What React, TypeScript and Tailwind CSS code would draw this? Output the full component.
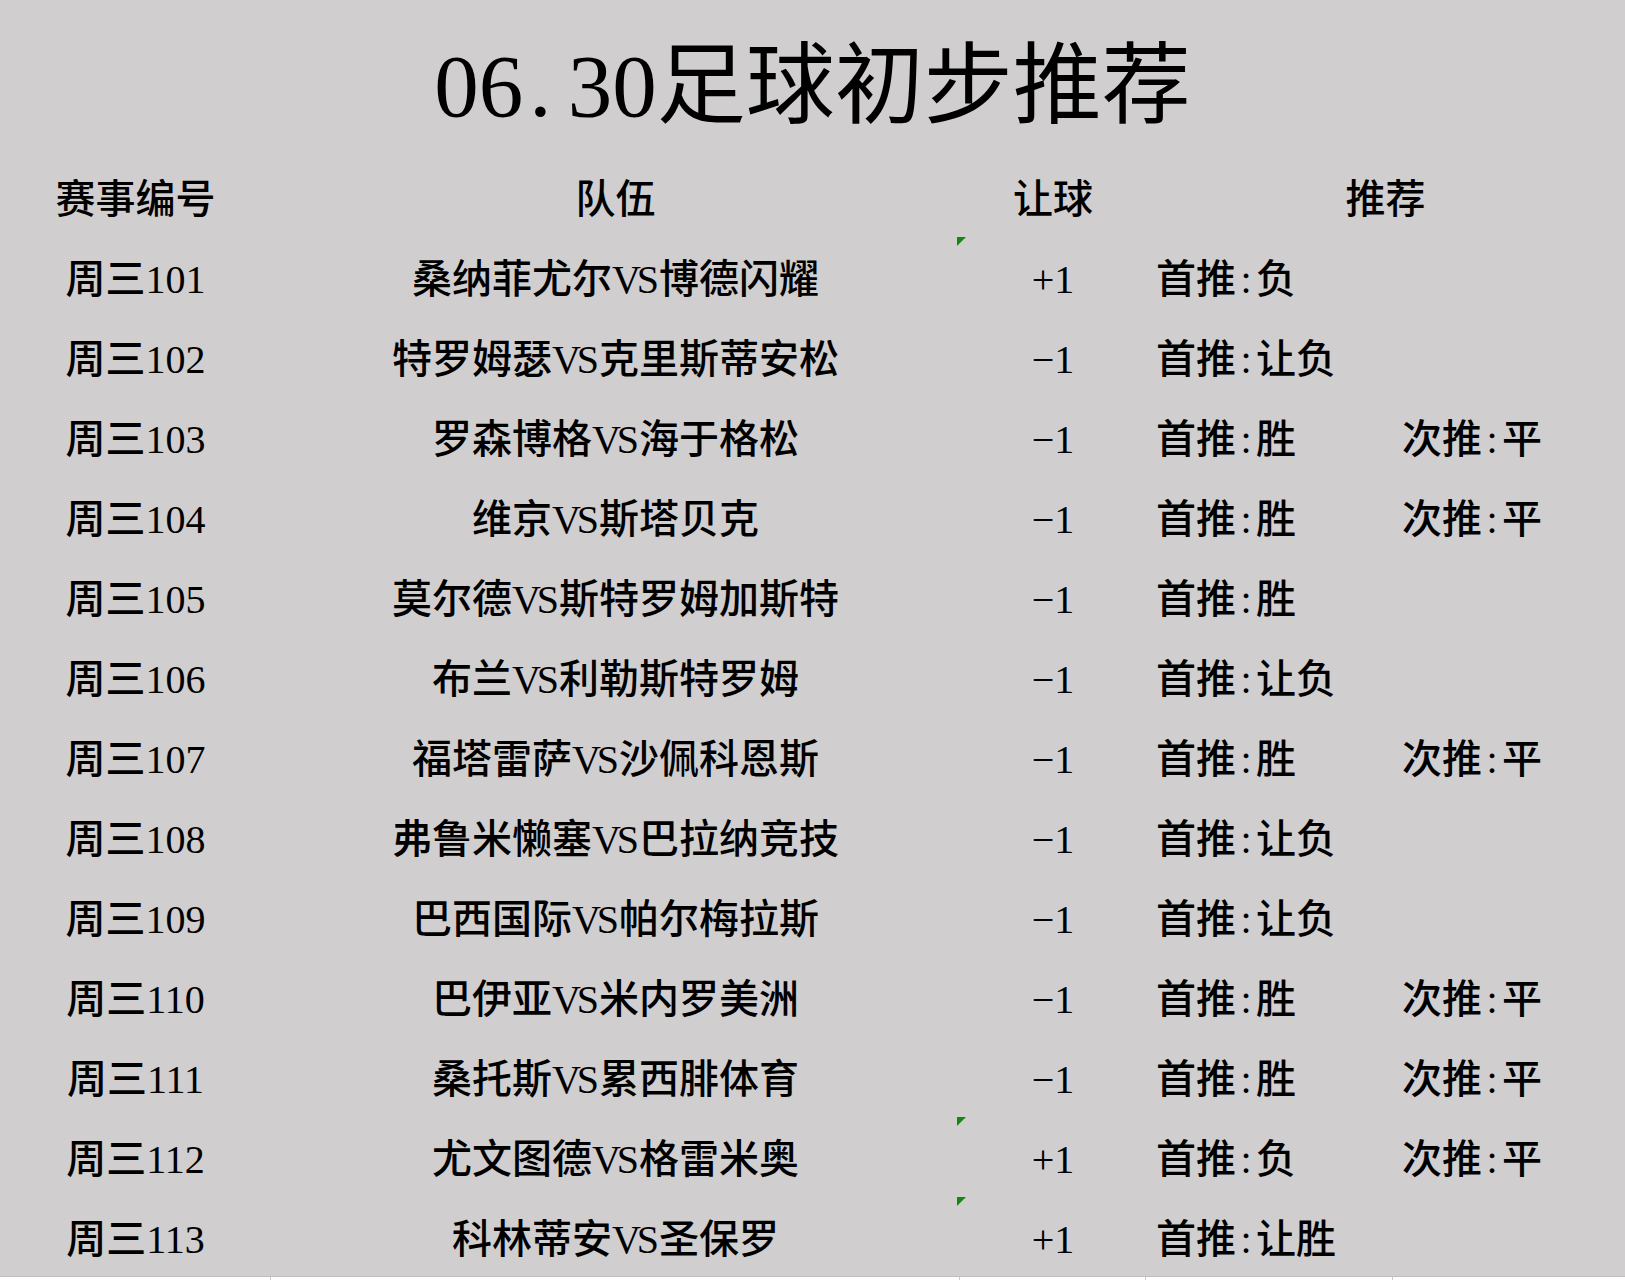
import React from "react";

type Row = {
  id: string;
  teams: [string, string];
  hc: string;
  first: string;
  second?: string;
  tri?: boolean;
};

const rows: Row[] = [
  { id: "101", teams: ["桑纳菲尤尔", "博德闪耀"], hc: "+1", first: "负", tri: true },
  { id: "102", teams: ["特罗姆瑟", "克里斯蒂安松"], hc: "−1", first: "让负" },
  { id: "103", teams: ["罗森博格", "海于格松"], hc: "−1", first: "胜", second: "平" },
  { id: "104", teams: ["维京", "斯塔贝克"], hc: "−1", first: "胜", second: "平" },
  { id: "105", teams: ["莫尔德", "斯特罗姆加斯特"], hc: "−1", first: "胜" },
  { id: "106", teams: ["布兰", "利勒斯特罗姆"], hc: "−1", first: "让负" },
  { id: "107", teams: ["福塔雷萨", "沙佩科恩斯"], hc: "−1", first: "胜", second: "平" },
  { id: "108", teams: ["弗鲁米懒塞", "巴拉纳竞技"], hc: "−1", first: "让负" },
  { id: "109", teams: ["巴西国际", "帕尔梅拉斯"], hc: "−1", first: "让负" },
  { id: "110", teams: ["巴伊亚", "米内罗美洲"], hc: "−1", first: "胜", second: "平" },
  { id: "111", teams: ["桑托斯", "累西腓体育"], hc: "−1", first: "胜", second: "平" },
  { id: "112", teams: ["尤文图德", "格雷米奥"], hc: "+1", first: "负", second: "平", tri: true },
  { id: "113", teams: ["科林蒂安", "圣保罗"], hc: "+1", first: "让胜", tri: true },
];

const Colon = () => <span className="inline-block w-[20px] text-center">:</span>;
const VS = () => <span className="tracking-[-0.1em] pr-[4px]">VS</span>;

function Pick({ label, value }: { label: string; value: string }) {
  return (
    <span className="whitespace-nowrap">
      {label}
      <Colon />
      {value}
    </span>
  );
}

const cell = "h-[80px] flex items-center pt-[8px]";

export default function App() {
  return (
    <div className="w-[1625px] h-[1280px] bg-[#d0cecf] text-black font-['Liberation_Serif','Noto_Sans_CJK_SC',serif] overflow-hidden flex flex-col">
      <div className="h-[156px] flex items-center justify-center pt-[16px]">
        <h1 className="text-[89px] leading-none font-normal whitespace-nowrap">
          06<span className="inline-block w-[0.5em] text-left pl-[6px]">.</span>30足球初步推荐
        </h1>
      </div>
      <div className="grid grid-cols-[271px_689px_186px_247px_232px] text-[40px] leading-none font-medium">
        <div className={`${cell} justify-center`}>赛事编号</div>
        <div className={`${cell} justify-center`}>队伍</div>
        <div className={`${cell} justify-center`}>让球</div>
        <div className={`${cell} col-span-2 justify-center`}>推荐</div>
        {rows.map((r) => (
          <React.Fragment key={r.id}>
            <div className={`${cell} justify-center`}>周三{r.id}</div>
            <div className={`${cell} justify-center`}>
              <span className="whitespace-nowrap">
                {r.teams[0]}
                <VS />
                {r.teams[1]}
              </span>
            </div>
            <div className={`${cell} relative justify-center`}>
              {r.tri && (
                <svg className="absolute left-[-3px] top-[1px]" width="9" height="9" viewBox="0 0 9 9">
                  <polygon points="0,0 9,0 0,9" fill="#108a10" />
                </svg>
              )}
              <span>{r.hc}</span>
            </div>
            <div className={`${cell} pl-[10px]`}>
              <Pick label="首推" value={r.first} />
            </div>
            <div className={`${cell} pl-[9px]`}>
              {r.second && <Pick label="次推" value={r.second} />}
            </div>
          </React.Fragment>
        ))}
      </div>
      <div className="border-t border-[#bfbfc2] flex-1 bg-white grid grid-cols-[271px_689px_186px_247px_232px]">
        <div className="border-r border-[#c9c9dc]" />
        <div className="border-r border-[#c9c9dc]" />
        <div className="border-r border-[#c9c9dc]" />
        <div className="border-r border-[#c9c9dc]" />
        <div />
      </div>
    </div>
  );
}
